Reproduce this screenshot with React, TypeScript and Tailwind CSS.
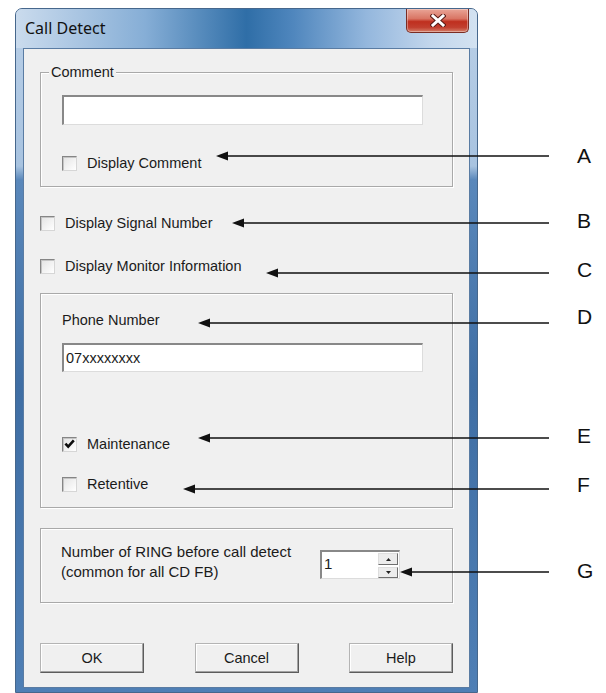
const ui = "font-['Liberation_Sans',Arial,sans-serif] text-[14.5px] leading-[18px] text-[#1b1b1b]";

function Check({ checked = false }: { checked?: boolean }) {
  return (
    <span className="flex h-[15px] w-[15px] shrink-0 items-center justify-center border border-[#858585] border-b-[#d6d6d6] border-r-[#d6d6d6] bg-gradient-to-br from-[#e3e3e3] to-white shadow-[inset_1px_1px_0_#c4c4c4]">
      {checked && (
        <svg width="11" height="10" viewBox="0 0 11 10">
          <path d="M1.4 4.6 L4.2 7.6 L9.8 1.4" fill="none" stroke="#0d0d0d" strokeWidth="2.6" />
        </svg>
      )}
    </span>
  );
}

function CheckRow({ label, checked }: { label: string; checked?: boolean }) {
  return (
    <div className="flex h-[18px] items-center gap-[10px]">
      <Check checked={checked} />
      <span>{label}</span>
    </div>
  );
}

function TextBox({ value = "", className = "" }: { value?: string; className?: string }) {
  return (
    <div
      className={`flex w-[361px] items-center border-l-2 border-t-2 border-[#888] border-b border-r border-b-[#dcdcdc] border-r-[#dcdcdc] bg-white pl-[2px] ${className}`}
    >
      {value}
    </div>
  );
}

function Group({ children, className = "" }: { children: React.ReactNode; className?: string }) {
  return (
    <div className={`relative border border-[#a9a9a9] shadow-[inset_1px_1px_0_#fff,1px_1px_0_#fff] ${className}`}>
      {children}
    </div>
  );
}

function PushButton({ label }: { label: string }) {
  return (
    <div className="flex h-[30px] w-[104px] items-center justify-center border border-[#b4b4b4] border-b-[#5c5c5c] border-r-[#5c5c5c] bg-[#f0f0f0] shadow-[inset_-1px_-1px_0_#a3a3a3,inset_1px_1px_0_#fff]">
      {label}
    </div>
  );
}

function SpinBox() {
  return (
    <div className="flex h-[29px] w-[80px] border-l-2 border-t-2 border-[#888] border-b border-r border-b-[#dcdcdc] border-r-[#dcdcdc] bg-white">
      <div className="flex-1 pl-[2px] pt-[3px] text-[15px]">1</div>
      <div className="flex w-[21px] flex-col gap-[2px] pr-[1px] pt-[1px]">
        <div className="flex h-[12px] items-center justify-center border border-[#dedede] border-b-[#6f6f6f] border-r-[#6f6f6f] bg-[#ececec]">
          <svg width="5" height="3" viewBox="0 0 5 3"><path d="M0 3 L2.5 0 L5 3Z" fill="#222" /></svg>
        </div>
        <div className="flex h-[11px] items-center justify-center border border-[#dedede] border-b-[#6f6f6f] border-r-[#6f6f6f] bg-[#ececec]">
          <svg width="5" height="3" viewBox="0 0 5 3"><path d="M0 0 L5 0 L2.5 3Z" fill="#222" /></svg>
        </div>
      </div>
    </div>
  );
}

// callout lines: [y, arrow tip x]
const callouts: [number, number][] = [
  [156, 216],
  [223, 232],
  [273, 266],
  [323, 198],
  [438, 198],
  [489, 183],
  [572, 400],
];

const letters: [string, number][] = [
  ["A", 156],
  ["B", 221],
  ["C", 270],
  ["D", 317],
  ["E", 436],
  ["F", 485],
  ["G", 571],
];

export default function App() {
  return (
    <div className="relative h-[693px] w-[606px] overflow-hidden bg-white">
      <div className="ml-[15px] pt-[8px]">
        {/* dialog window */}
        <div className="flex h-[685px] w-[463px] flex-col overflow-hidden rounded-t-[7px] border border-[#46678c] bg-[linear-gradient(180deg,#b9cfe7_0%,#a8c3e0_23%,#5a88bb_25%,#3f6ea4_55%,#4f7fb5_100%)]">
          <div className="flex h-[39px] shrink-0 items-start justify-between bg-[linear-gradient(90deg,#cadbed_0%,#b2cbe5_10%,#86aed6_28%,#2f6ea7_50%,#4f86bd_60%,#94b7dd_76%,#c2d6ec_90%,#d3e2f1_100%)] pl-[9px] pr-[8px]">
            <span className="mt-[8px] font-['Noto_Sans',sans-serif] text-[16px] leading-[22px] text-[#111]">
              Call Detect
            </span>
            <div className="flex h-[24px] w-[63px] items-center justify-center rounded-b-[5px] border border-t-0 border-[#7a2c23] bg-[linear-gradient(180deg,#e9a597_0%,#d97564_42%,#bf2f1f_55%,#c23f2f_80%,#d57f69_100%)] shadow-[inset_0_0_0_1px_rgba(255,255,255,0.35)]">
              <svg width="16" height="13" viewBox="0 0 16 13">
                <path d="M3 2 L13 11 M13 2 L3 11" stroke="#5a1d17" strokeWidth="5" strokeLinecap="square" />
                <path d="M3 2 L13 11 M13 2 L3 11" stroke="#fff" strokeWidth="3" strokeLinecap="square" />
              </svg>
            </div>
          </div>

          <div className="flex px-[7px]">
            <div className={`flex h-[640px] w-[447px] flex-col border border-[#5a7ca3] bg-[#f0f0f0] px-[16px] ${ui}`}>
              <Group className="mt-[23px] h-[115px] pl-[21px] pt-[22px]">
                <span className="absolute left-[8px] top-[-10px] bg-[#f0f0f0] px-[2px]">Comment</span>
                <TextBox className="h-[30px]" />
                <div className="mt-[29px]">
                  <CheckRow label="Display Comment" />
                </div>
              </Group>

              <div className="mt-[27px]">
                <CheckRow label="Display Signal Number" />
              </div>
              <div className="mt-[25px]">
                <CheckRow label="Display Monitor Information" />
              </div>

              <Group className="mt-[18px] h-[215px] pl-[21px] pt-[17px]">
                <div>Phone Number</div>
                <TextBox value="07xxxxxxxx" className="mt-[14px] h-[29px]" />
                <div className="mt-[63px]">
                  <CheckRow label="Maintenance" checked />
                </div>
                <div className="mt-[22px]">
                  <CheckRow label="Retentive" />
                </div>
              </Group>

              <Group className="mt-[20px] flex h-[75px] items-start pl-[20px]">
                <div className="w-[259px] pt-[13px] text-[15px] leading-[20px]">
                  <div>Number of RING before call detect</div>
                  <div>(common for all CD FB)</div>
                </div>
                <div className="mt-[21px]">
                  <SpinBox />
                </div>
              </Group>

              <div className="mt-[40px] flex justify-between">
                <PushButton label="OK" />
                <PushButton label="Cancel" />
                <PushButton label="Help" />
              </div>
            </div>
          </div>
        </div>
      </div>

      {/* callout arrows */}
      <svg className="pointer-events-none absolute inset-0" width="606" height="693">
        {callouts.map(([y, x]) => (
          <g key={y}>
            <line x1={x + 8} y1={y} x2={549} y2={y} stroke="#111" strokeWidth="1.4" />
            <path d={`M${x} ${y} L${x + 12} ${y - 4.5} L${x + 12} ${y + 4.5}Z`} fill="#111" />
          </g>
        ))}
      </svg>
      {letters.map(([l, y]) => (
        <div
          key={l}
          className="absolute left-[577px] font-['Liberation_Sans',Arial,sans-serif] text-[21px] leading-[24px] text-[#111]"
          style={{ top: y - 12 }}
        >
          {l}
        </div>
      ))}
    </div>
  );
}
